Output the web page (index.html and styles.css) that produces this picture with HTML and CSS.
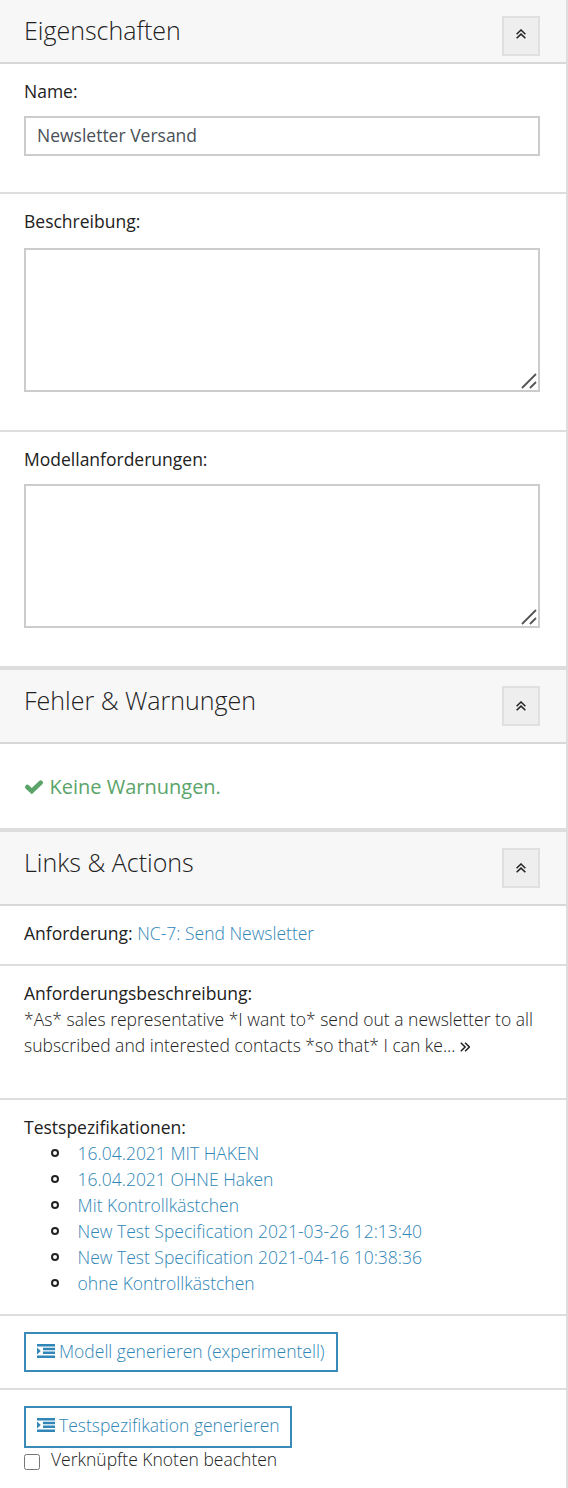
FILE: index.html
```html
<!DOCTYPE html>
<html lang="de"><head><meta charset="utf-8"><title>Eigenschaften</title><link rel="stylesheet" href="styles.css"></head>
<body>
<svg class="defs" width="0" height="0"><defs>
<symbol id="up" viewBox="0 0 10 10"><path d="M.6 5.200 5 1l4.400 4.200M.6 9.300 5 5.100l4.400 4.200" fill="none" stroke="#222" stroke-width="1.500"/></symbol>
<symbol id="indent" viewBox="0 0 18 14"><path d="M0 0h18v2.600H0zM6 3.800h12v2.400H6zM6 7.600h12V10H6zM0 11.400h18V14H0zM0 3.400 3.800 7 0 10.600z" fill="currentColor"/></symbol>
</defs></svg>
<main class="panel">
<header class="head first"><h2>Eigenschaften</h2><button class="toggle"><svg class="up"><use href="#up"/></svg></button></header>
<section class="row name"><label>Name:</label><input class="field" value="Newsletter Versand"></section>
<section class="row desc"><label>Beschreibung:</label><div class="area"><svg class="grip" viewBox="0 0 16 16"><path d="M1 15 15 1M9 15l6-6"/></svg></div></section>
<section class="row model"><label>Modellanforderungen:</label><div class="area"><svg class="grip" viewBox="0 0 16 16"><path d="M1 15 15 1M9 15l6-6"/></svg></div></section>
<header class="head"><h2>Fehler &amp; Warnungen</h2><button class="toggle"><svg class="up"><use href="#up"/></svg></button></header>
<section class="row ok"><svg class="check" viewBox="0 0 18 14"><path d="M2.300 7 6.800 11.200 15.700 2.600"/></svg><span>Keine Warnungen.</span></section>
<header class="head"><h2>Links &amp; Actions</h2><button class="toggle"><svg class="up"><use href="#up"/></svg></button></header>
<section class="row req"><b>Anforderung:</b> <a>NC-7: Send Newsletter</a></section>
<section class="row reqdesc"><b>Anforderungsbeschreibung:</b><p>*As* sales representative *I want to* send out a newsletter to all<br>subscribed and interested contacts *so that* I can ke... <svg class="more" viewBox="0 0 10 10"><path d="M.8.700 5.100 5 .8 9.300M5.100.700 9.400 5 5.100 9.300"/></svg></p></section>
<section class="row specs"><b>Testspezifikationen:</b><ul><li><a>16.04.2021 MIT HAKEN</a></li><li><a>16.04.2021 OHNE Haken</a></li><li><a>Mit Kontrollkästchen</a></li><li><a>New Test Specification 2021-03-26 12:13:40</a></li><li><a>New Test Specification 2021-04-16 10:38:36</a></li><li><a>ohne Kontrollkästchen</a></li></ul></section>
<section class="row gen"><button class="action model-btn"><svg class="indent"><use href="#indent"/></svg><span>Modell generieren (experimentell)</span></button></section>
<section class="row gen2"><button class="action spec-btn"><svg class="indent"><use href="#indent"/></svg><span>Testspezifikation generieren</span></button><label class="linked"><input type="checkbox"><span>Verknüpfte Knoten beachten</span></label></section>
</main></body></html>
```
FILE: styles.css
```css
*,*::before{box-sizing:border-box}
body{margin:0;background:#fff;color:#212121;font:300 17.5px/26px "Open Sans",sans-serif}
.defs{display:block;height:0}
.panel{width:568px;height:1488px;border-right:2px solid #ddd;overflow:hidden}
.head{height:78px;display:flex;justify-content:space-between;background:#f7f7f7;border-top:4px solid #ddd;border-bottom:2px solid #d8d8d8;padding:16px 26px 0 24px}
.head.first{height:64px;border-top:0}
h2{margin:-3px 0 0;font-size:25px;line-height:34px;font-weight:300}
.toggle{width:38px;height:40px;padding:0;border:2px solid #e0e0e0;background:#eee;display:flex;align-items:center;justify-content:center}
.first .toggle{padding-bottom:4px}
.up{width:10px;height:10px}
.row{border-bottom:2px solid #ddd;padding:14px 26px 0 24px}
.row>label,b{display:block;font-weight:400}
.name{height:130px}
.field{display:block;width:100%;height:40px;margin-top:12px;border:2px solid #ccc;padding:0 11px 2px;font:400 17.5px "Open Sans",sans-serif;color:#495057}
.desc{height:238px}
.model{height:234px;border-bottom:0}
.area{height:144px;margin-top:14px;border:2px solid #ccc;display:flex;align-items:flex-end;justify-content:flex-end}
.model .area{margin-top:12px}
.grip{width:16px;height:16px;margin:0 1px 1px 0;fill:none;stroke:#555;stroke-width:1.800}
.ok{height:84px;border:0;padding-top:30px;color:#5aa469;font-size:20px;font-weight:400;display:flex}
.check{width:18px;height:14px;margin:6px 6.500px 0 1px;fill:none;stroke:currentColor;stroke-width:4.600;stroke-linecap:round;overflow:visible}
.req{height:60px}
.req b{display:inline}
a{color:#3086b6}
.reqdesc{height:134px}
p{margin:0;white-space:nowrap}
.more{width:10px;height:10px;fill:none;stroke:#222;stroke-width:1.500}
.specs{height:216px}
ul{margin:0;padding-left:54px;list-style:none}
li{height:26px;display:flex;align-items:center}
li::before{content:"";width:8px;height:8px;border:2px solid #222;border-radius:50%;margin:-1px 18.600px 0 -27px}
.gen{height:74px;padding-top:16px}
.gen2{border:0;padding-top:16px}
.action{height:40px;border:2px solid #3a8ab8;background:#fff;color:#3086b6;font:300 17.5px/24px "Open Sans",sans-serif;padding:0 11px 2px;display:flex;align-items:center;gap:4px;white-space:nowrap}
.model-btn{width:314px}
.spec-btn{width:268px;height:42px;padding-bottom:4px}
.indent{width:18px;height:14px;flex:none}
.row>.linked{display:flex;font-weight:300;line-height:22px}
.linked input{width:16px;height:16px;margin:6px 11px 0 0}
```
